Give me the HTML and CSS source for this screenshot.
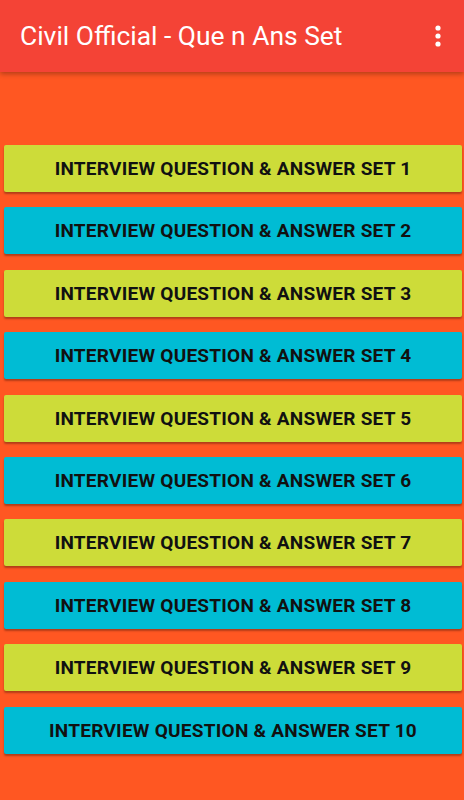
FILE: index.html
```html
<!DOCTYPE html>
<html lang="en">

<head>
    <meta charset="utf-8" />
    <title>Civil Official - Que n Ans Set</title>
    <link rel="stylesheet" href="styles.css">
</head>

<body>
    <div class="AppBar">
        <div class="Title">Civil Official - Que n Ans Set</div>
        <div class="Menu">
            <svg width="8" height="24" viewBox="0 0 8 24">
                <circle cx="4" cy="4" r="2.6" fill="#fff" />
                <circle cx="4" cy="12" r="2.6" fill="#fff" />
                <circle cx="4" cy="20" r="2.6" fill="#fff" />
            </svg>
        </div>
    </div>
    <div class="Content">
        <div class="SetButton Lime">INTERVIEW QUESTION &amp; ANSWER SET 1</div>
        <div class="SetButton Cyan">INTERVIEW QUESTION &amp; ANSWER SET 2</div>
        <div class="SetButton Lime">INTERVIEW QUESTION &amp; ANSWER SET 3</div>
        <div class="SetButton Cyan">INTERVIEW QUESTION &amp; ANSWER SET 4</div>
        <div class="SetButton Lime">INTERVIEW QUESTION &amp; ANSWER SET 5</div>
        <div class="SetButton Cyan">INTERVIEW QUESTION &amp; ANSWER SET 6</div>
        <div class="SetButton Lime">INTERVIEW QUESTION &amp; ANSWER SET 7</div>
        <div class="SetButton Cyan">INTERVIEW QUESTION &amp; ANSWER SET 8</div>
        <div class="SetButton Lime">INTERVIEW QUESTION &amp; ANSWER SET 9</div>
        <div class="SetButton Cyan">INTERVIEW QUESTION &amp; ANSWER SET 10</div>
    </div>
</body>

</html>
```

FILE: styles.css
```css
html,
body {
    margin: 0;
    height: 100%;
}

body {
    background: #ff5722;
    font-family: Roboto, "Liberation Sans", sans-serif;
    overflow: hidden;
}

.AppBar {
    height: 72px;
    background: #f44336;
    display: flex;
    align-items: center;
    padding: 0 22px 0 20px;
    box-shadow: 0 2px 5px rgba(0, 0, 0, 0.3);
    position: relative;
}

.Title {
    flex: 1;
    color: #ffffff;
    font-size: 26.4px;
    font-weight: 400;
}

.Menu {
    display: flex;
    align-items: center;
    margin-top: -1px;
}

.Content {
    display: flex;
    flex-direction: column;
    gap: 15.4px;
    padding: 73px 2px 0 4px;
}

.SetButton {
    height: 47px;
    border-radius: 2px;
    display: flex;
    align-items: center;
    justify-content: center;
    font-size: 19px;
    font-weight: 700;
    letter-spacing: 0.25px;
    color: #111111;
    box-shadow: 0 2px 2px rgba(0, 0, 0, 0.3);
}

.Lime {
    background: #cddc39;
}

.Cyan {
    background: #00bcd4;
}
```
